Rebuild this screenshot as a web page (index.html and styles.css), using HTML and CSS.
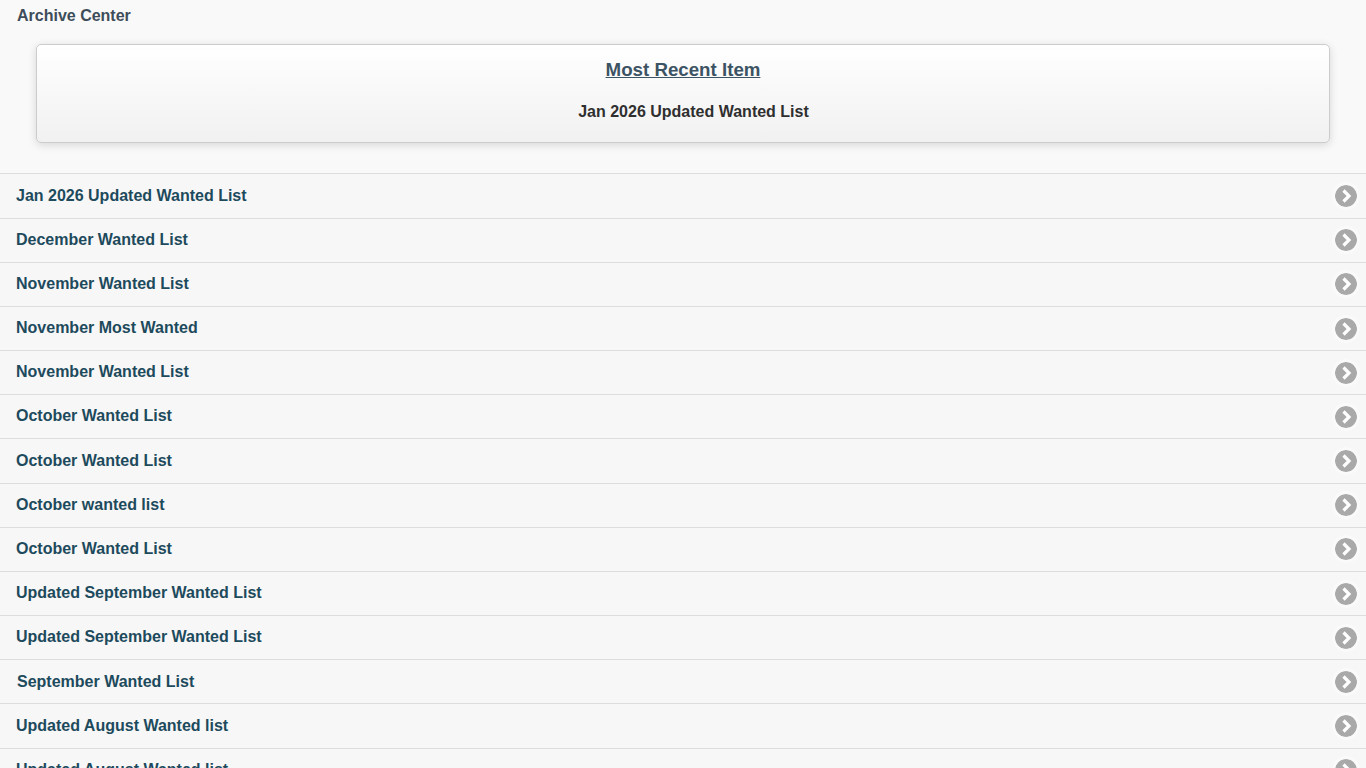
FILE: index.html
```html
<!DOCTYPE html>
<html lang="en">
<head>
<meta charset="utf-8">
<title>Archive Center</title>
<link rel="stylesheet" href="styles.css">
</head>
<body>
<header class="page-title">Archive Center</header>
<section class="recent">
  <h2 class="recent-heading"><a href="#">Most Recent Item</a></h2>
  <p class="recent-item">Jan 2026 Updated Wanted List</p>
</section>
<ul class="list">
  <li class="row"><a href="#"><span>Jan 2026 Updated Wanted List</span><svg class="chev" viewBox="0 0 22 22"><circle cx="11" cy="11" r="11"/><path d="M8.5 5.5 14 11l-5.5 5.5"/></svg></a></li>
  <li class="row"><a href="#"><span>December Wanted List</span><svg class="chev" viewBox="0 0 22 22"><circle cx="11" cy="11" r="11"/><path d="M8.5 5.5 14 11l-5.5 5.5"/></svg></a></li>
  <li class="row"><a href="#"><span>November Wanted List</span><svg class="chev" viewBox="0 0 22 22"><circle cx="11" cy="11" r="11"/><path d="M8.5 5.5 14 11l-5.5 5.5"/></svg></a></li>
  <li class="row"><a href="#"><span>November Most Wanted</span><svg class="chev" viewBox="0 0 22 22"><circle cx="11" cy="11" r="11"/><path d="M8.5 5.5 14 11l-5.5 5.5"/></svg></a></li>
  <li class="row"><a href="#"><span>November Wanted List</span><svg class="chev" viewBox="0 0 22 22"><circle cx="11" cy="11" r="11"/><path d="M8.5 5.5 14 11l-5.5 5.5"/></svg></a></li>
  <li class="row"><a href="#"><span>October Wanted List</span><svg class="chev" viewBox="0 0 22 22"><circle cx="11" cy="11" r="11"/><path d="M8.5 5.5 14 11l-5.5 5.5"/></svg></a></li>
  <li class="row"><a href="#"><span>October Wanted List</span><svg class="chev" viewBox="0 0 22 22"><circle cx="11" cy="11" r="11"/><path d="M8.5 5.5 14 11l-5.5 5.5"/></svg></a></li>
  <li class="row"><a href="#"><span>October wanted list</span><svg class="chev" viewBox="0 0 22 22"><circle cx="11" cy="11" r="11"/><path d="M8.5 5.5 14 11l-5.5 5.5"/></svg></a></li>
  <li class="row"><a href="#"><span>October Wanted List</span><svg class="chev" viewBox="0 0 22 22"><circle cx="11" cy="11" r="11"/><path d="M8.5 5.5 14 11l-5.5 5.5"/></svg></a></li>
  <li class="row"><a href="#"><span>Updated September Wanted List</span><svg class="chev" viewBox="0 0 22 22"><circle cx="11" cy="11" r="11"/><path d="M8.5 5.5 14 11l-5.5 5.5"/></svg></a></li>
  <li class="row"><a href="#"><span>Updated September Wanted List</span><svg class="chev" viewBox="0 0 22 22"><circle cx="11" cy="11" r="11"/><path d="M8.5 5.5 14 11l-5.5 5.5"/></svg></a></li>
  <li class="row indented"><a href="#"><span>September Wanted List</span><svg class="chev" viewBox="0 0 22 22"><circle cx="11" cy="11" r="11"/><path d="M8.5 5.5 14 11l-5.5 5.5"/></svg></a></li>
  <li class="row"><a href="#"><span>Updated August Wanted list</span><svg class="chev" viewBox="0 0 22 22"><circle cx="11" cy="11" r="11"/><path d="M8.5 5.5 14 11l-5.5 5.5"/></svg></a></li>
  <li class="row"><a href="#"><span>Updated August Wanted list</span><svg class="chev" viewBox="0 0 22 22"><circle cx="11" cy="11" r="11"/><path d="M8.5 5.5 14 11l-5.5 5.5"/></svg></a></li>
</ul>
</body>
</html>
```
FILE: styles.css
```css
html, body {
  margin: 0;
  height: 768px;
  overflow: hidden;
}
body {
  background: #f9f9f9;
  font-family: "Liberation Sans", Arial, sans-serif;
  font-weight: 700;
  font-size: 16px;
}
.page-title {
  padding: 6px 0 0 17px;
  height: 44px;
  box-sizing: border-box;
  line-height: 19px;
  color: #3e4d59;
}
.recent {
  margin: 0 36px;
  height: 99px;
  box-sizing: border-box;
  border: 1px solid #ccc;
  border-radius: 5px;
  background: linear-gradient(#fff, #f1f1f1);
  box-shadow: 0 2px 8px rgba(0, 0, 0, 0.14);
  text-align: center;
  padding-top: 14px;
}
.recent-heading {
  margin: 0;
  font-size: 18.72px;
  line-height: 22px;
}
.recent-heading a {
  color: #3c5363;
}
.recent-item {
  margin: 21px 0 0 21px;
  line-height: 19px;
  color: #2f2f2f;
}
.list {
  list-style: none;
  margin: 30.4px 0 0;
  padding: 0;
}
.row {
  height: 44.172px;
  box-sizing: border-box;
  border-top: 1px solid #ddd;
  background: #f7f7f7;
}
.row a {
  display: flex;
  align-items: center;
  justify-content: space-between;
  box-sizing: border-box;
  height: 100%;
  padding: 0 9px 0.88px 16px;
  color: #1d4a5c;
  text-decoration: none;
}
.row.indented a {
  padding-bottom: 0.4px;
  padding-left: 17px;
}
.chev {
  width: 22px;
  height: 22px;
  margin-top: 1.08px;
  flex: none;
  border-radius: 50%;
  box-shadow: 0 0 0 3px rgba(255, 255, 255, 0.4);
}
.indented .chev {
  margin-top: 0.6px;
}
.chev circle {
  fill: #a9a9a9;
}
.chev path {
  fill: none;
  stroke: #fff;
  stroke-width: 3.2;
}
```
